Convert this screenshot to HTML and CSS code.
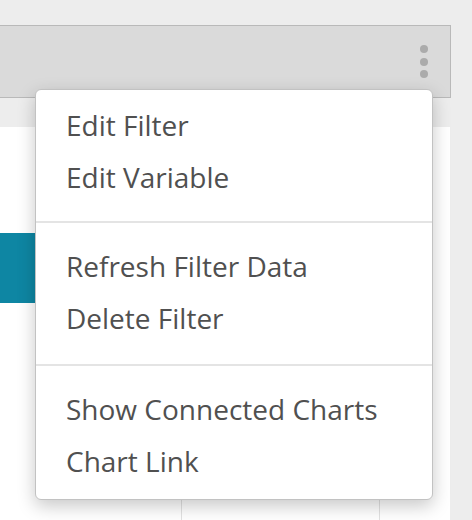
FILE: index.html
```html
<!DOCTYPE html>
<html>
<head>
<meta charset="utf-8">
<link rel="stylesheet" href="styles.css">
</head>
<body>
<div class="page">
  <div class="bar">
    <div class="kebab"><span></span><span></span><span></span></div>
  </div>
  <div class="panel">
    <div class="col col-a"><div class="teal"></div></div>
    <div class="col col-b"></div>
    <div class="col col-c"></div>
  </div>
  <div class="menu">
    <div class="group first">
      <div class="item">Edit Filter</div>
      <div class="item">Edit Variable</div>
    </div>
    <div class="group">
      <div class="item">Refresh Filter Data</div>
      <div class="item">Delete Filter</div>
    </div>
    <div class="group last">
      <div class="item">Show Connected Charts</div>
      <div class="item">Chart Link</div>
    </div>
  </div>
</div>
</body>
</html>
```
FILE: styles.css
```css
html, body {
  margin: 0;
  padding: 0;
  background: #ededed;
}
.page {
  position: relative;
  width: 472px;
  height: 520px;
  overflow: hidden;
  padding-top: 25px;
  box-sizing: border-box;
  font-family: "Open Sans", "Noto Sans", sans-serif;
}
.bar {
  width: 450px;
  height: 71px;
  box-sizing: content-box;
  background: #dadada;
  border-top: 1px solid #b9b9b9;
  border-bottom: 1px solid #b9b9b9;
  border-right: 1px solid #b9b9b9;
  display: flex;
  justify-content: flex-end;
  align-items: flex-start;
}
.kebab {
  display: flex;
  flex-direction: column;
  gap: 4.5px;
  margin-top: 19px;
  margin-right: 22px;
}
.kebab span {
  display: block;
  width: 8px;
  height: 8px;
  border-radius: 50%;
  background: #ababab;
}
.panel {
  margin-top: 29px;
  width: 450px;
  height: 400px;
  background: #fff;
  display: grid;
  grid-template-columns: 181px 198px 1fr;
}
.col-b, .col-c {
  border-left: 1px solid #e2e2e2;
}
.teal {
  margin-top: 106px;
  width: 36px;
  height: 70px;
  background: #0e86a3;
}
.menu {
  position: absolute;
  left: 35px;
  top: 89px;
  width: 396px;
  background: #fff;
  border: 1px solid #c2c2c2;
  border-radius: 6px;
  box-shadow: 0 6px 18px rgba(0, 0, 0, 0.22);
}
.group {
  padding: 17px 0 20px;
}
.group + .group {
  border-top: 2px solid #e4e4e4;
}
.group.first {
  padding-top: 9px;
  padding-bottom: 18px;
}
.group.last {
  padding-top: 17px;
  padding-bottom: 12px;
}
.item {
  padding-left: 30px;
  font-size: 28px;
  line-height: 52px;
  color: #505050;
  white-space: nowrap;
}
```
